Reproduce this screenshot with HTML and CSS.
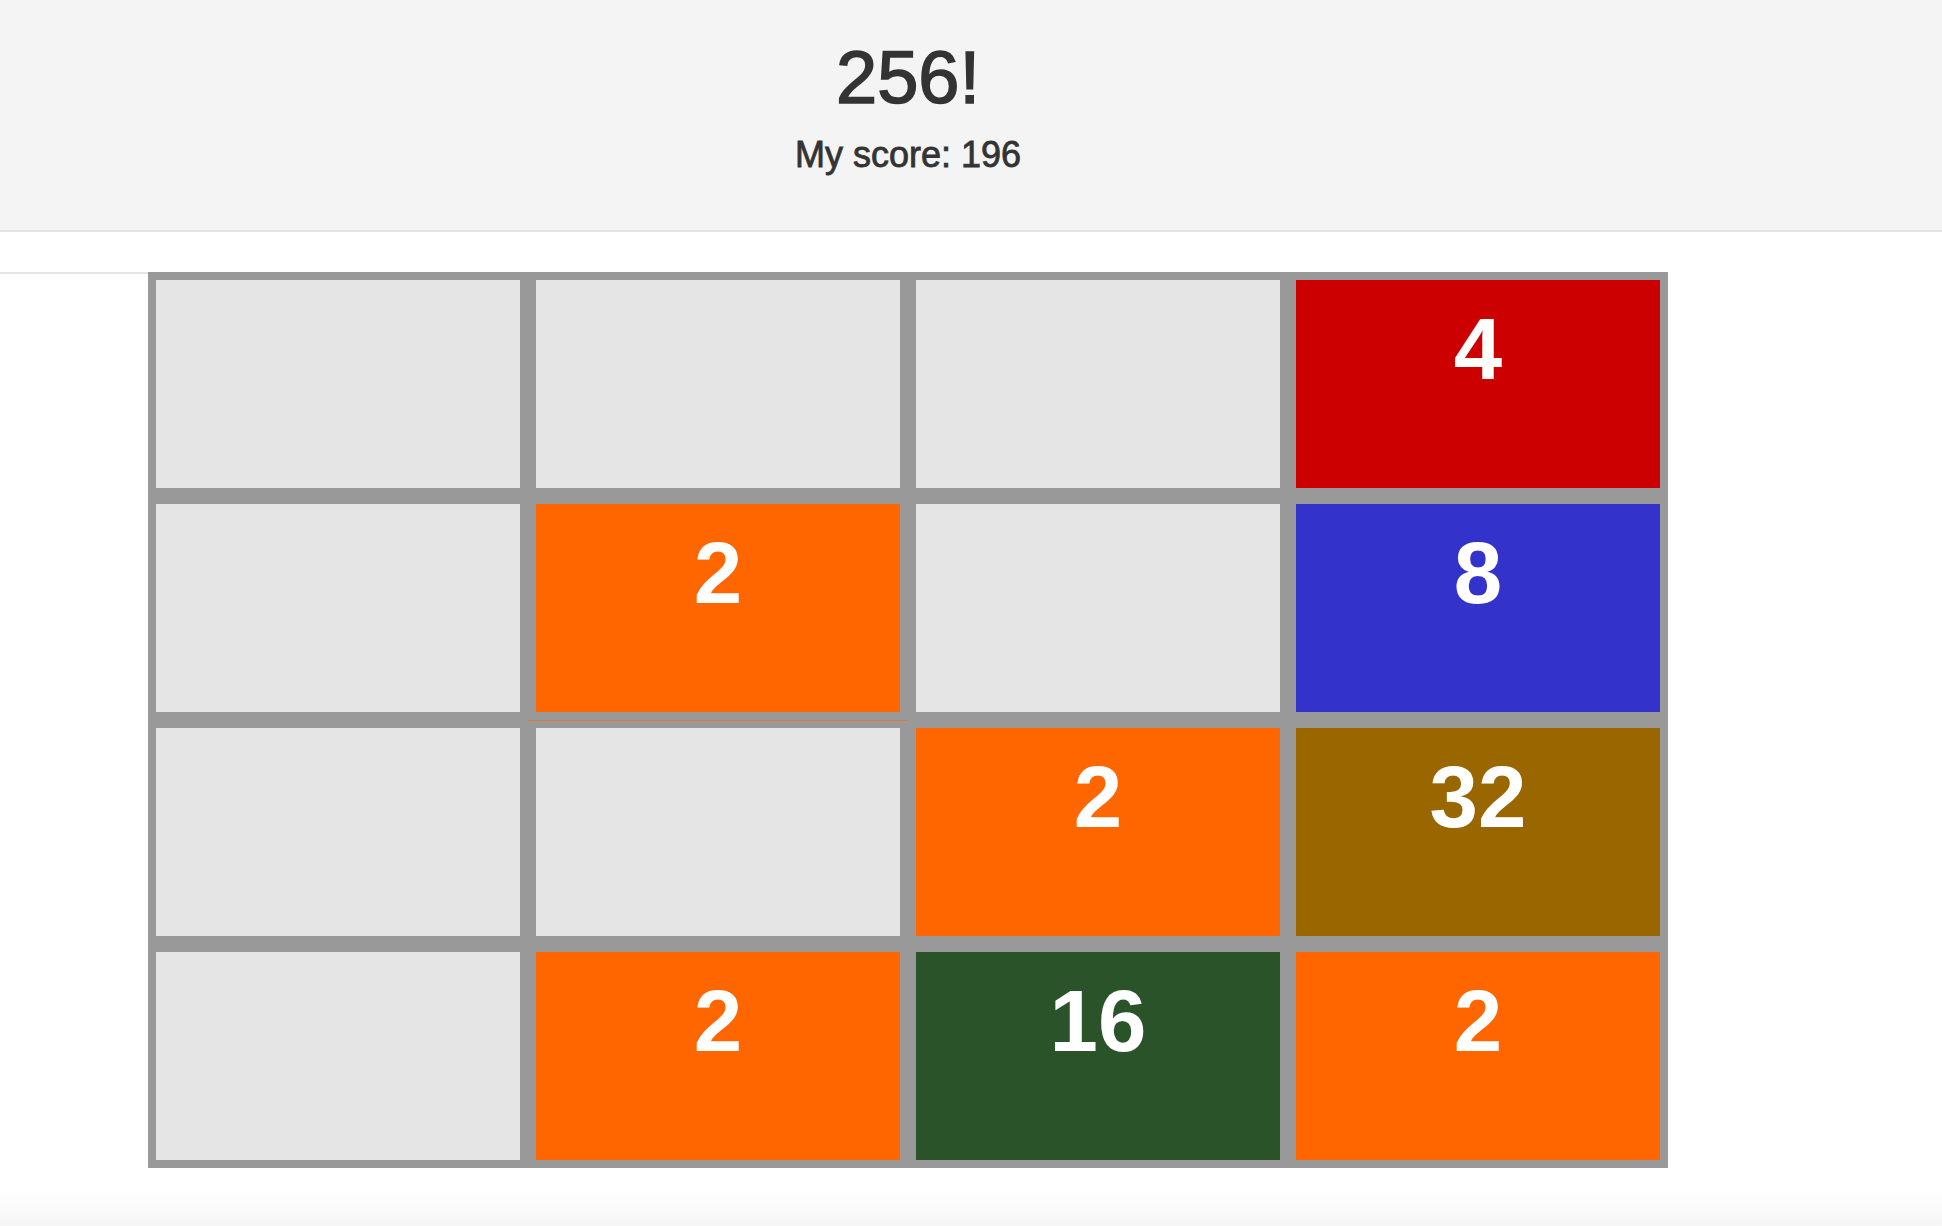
FILE: index.html
```html
<!DOCTYPE html>
<html lang="en">
<head>
<meta charset="utf-8">
<title>256!</title>
<link rel="stylesheet" href="styles.css">
</head>
<body>
<header class="header">
  <div class="header-inner">
    <h1 class="title">256!</h1>
    <p class="score">My score: 196</p>
  </div>
</header>
<main class="main">
  <div class="rule"></div>
  <div class="board">
    <div class="tile"></div>
    <div class="tile"></div>
    <div class="tile"></div>
    <div class="tile t4">4</div>
    <div class="tile"></div>
    <div class="tile t2">2</div>
    <div class="tile"></div>
    <div class="tile t8">8</div>
    <div class="tile"></div>
    <div class="tile"></div>
    <div class="tile t2">2</div>
    <div class="tile t32">32</div>
    <div class="tile"></div>
    <div class="tile t2">2</div>
    <div class="tile t16">16</div>
    <div class="tile t2">2</div>
    <div class="ghost-line"></div>
  </div>
</main>
</body>
</html>
```

FILE: styles.css
```css
html {
  min-height: 100%;
  background: linear-gradient(to bottom, #ffffff calc(100% - 36px), #f6f6f6 100%);
}
body {
  margin: 0;
  font-family: "Liberation Sans", Arial, Helvetica, sans-serif;
  color: #333333;
}
.header {
  background: #f4f4f4;
  border-bottom: 2px solid #e4e4e4;
  height: 230px;
}
.header-inner {
  width: 1816px;
  text-align: center;
  padding-top: 35px;
}
.title {
  margin: 0;
  font-size: 74px;
  line-height: 85px;
  font-weight: 500;
  -webkit-text-stroke: 1.6px #333333;
}
.score {
  margin: 14px 0 0;
  font-size: 36px;
  line-height: 41px;
  font-weight: 500;
  -webkit-text-stroke: 0.8px #333333;
}
.main {
  display: flex;
  align-items: flex-start;
  padding-top: 40px;
}
.rule {
  width: 148px;
  height: 2px;
  background: #e5e5e5;
}
.board {
  position: relative;
  display: grid;
  grid-template-columns: repeat(4, 364px);
  grid-auto-rows: 208px;
  gap: 16px;
  padding: 8px;
  background: #999999;
}
.tile {
  background: #e5e5e5;
  color: #ffffff;
  font-weight: bold;
  font-size: 87px;
  line-height: 86px;
  text-align: center;
  padding-top: 26px;
  box-sizing: border-box;
}
.t2 { background: #ff6600; }
.t4 { background: #cc0000; }
.t8 { background: #3333cc; }
.t16 { background: #2a532a; }
.t32 { background: #996600; }
.ghost-line {
  position: absolute;
  left: 380px;
  top: 448px;
  width: 380px;
  height: 1px;
  background: #d97a3c;
}
```
